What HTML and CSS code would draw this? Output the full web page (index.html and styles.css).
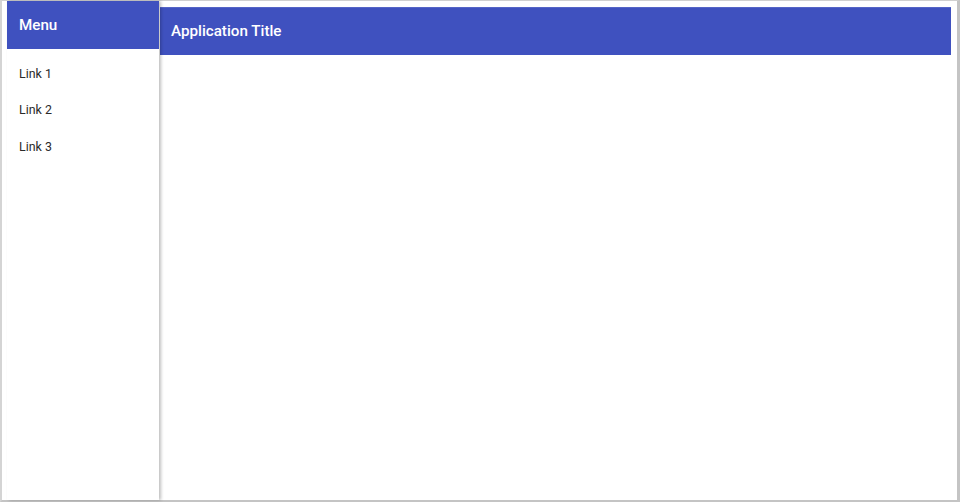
FILE: index.html
```html
<!DOCTYPE html>
<html>
<head>
<meta charset="utf-8">
<link rel="stylesheet" href="styles.css">
</head>
<body>
<div class="frame">
  <aside class="sidenav">
    <div class="menu-header">Menu</div>
    <nav class="links">
      <a class="link">Link 1</a>
      <a class="link">Link 2</a>
      <a class="link">Link 3</a>
    </nav>
  </aside>
  <main class="content">
    <header class="toolbar">Application Title</header>
  </main>
</div>
</body>
</html>
```
FILE: styles.css
```css
html, body {
  margin: 0;
  padding: 0;
  background: #fff;
}
.frame {
  box-sizing: border-box;
  width: 960px;
  height: 502px;
  border-top: 1px solid #d0d0d0;
  border-left: 2px solid #d4d4d4;
  border-right: 3px solid #c4c4c4;
  border-bottom: 2px solid #c4c4c4;
  display: flex;
  font-family: Roboto, "Noto Sans", sans-serif;
}
.sidenav {
  margin-left: 5px;
  width: 152px;
  flex: none;
  background: #fff;
  box-shadow: 2px 0 3px rgba(0,0,0,0.25);
  position: relative;
  z-index: 1;
  display: flex;
  flex-direction: column;
}
.menu-header {
  height: 48px;
  background: #3f51bf;
  color: #fff;
  font-size: 15.2px;
  font-weight: 500;
  display: flex;
  align-items: center;
  padding-left: 12px;
  box-sizing: border-box;
}
.links {
  display: flex;
  flex-direction: column;
  padding-top: 6px;
}
.link {
  height: 36.5px;
  display: flex;
  align-items: center;
  padding-left: 12px;
  font-size: 12.4px;
  color: #2a2a2a;
}
.content {
  flex: 1;
  padding: 6px 6px 0 1px;
}
.toolbar {
  height: 48px;
  background: #3f51bf;
  border-top: 1px solid #5565c6;
  box-sizing: border-box;
  color: #fff;
  font-size: 15.2px;
  font-weight: 500;
  display: flex;
  align-items: center;
  padding-left: 11px;
  padding-bottom: 1px;
}
```
